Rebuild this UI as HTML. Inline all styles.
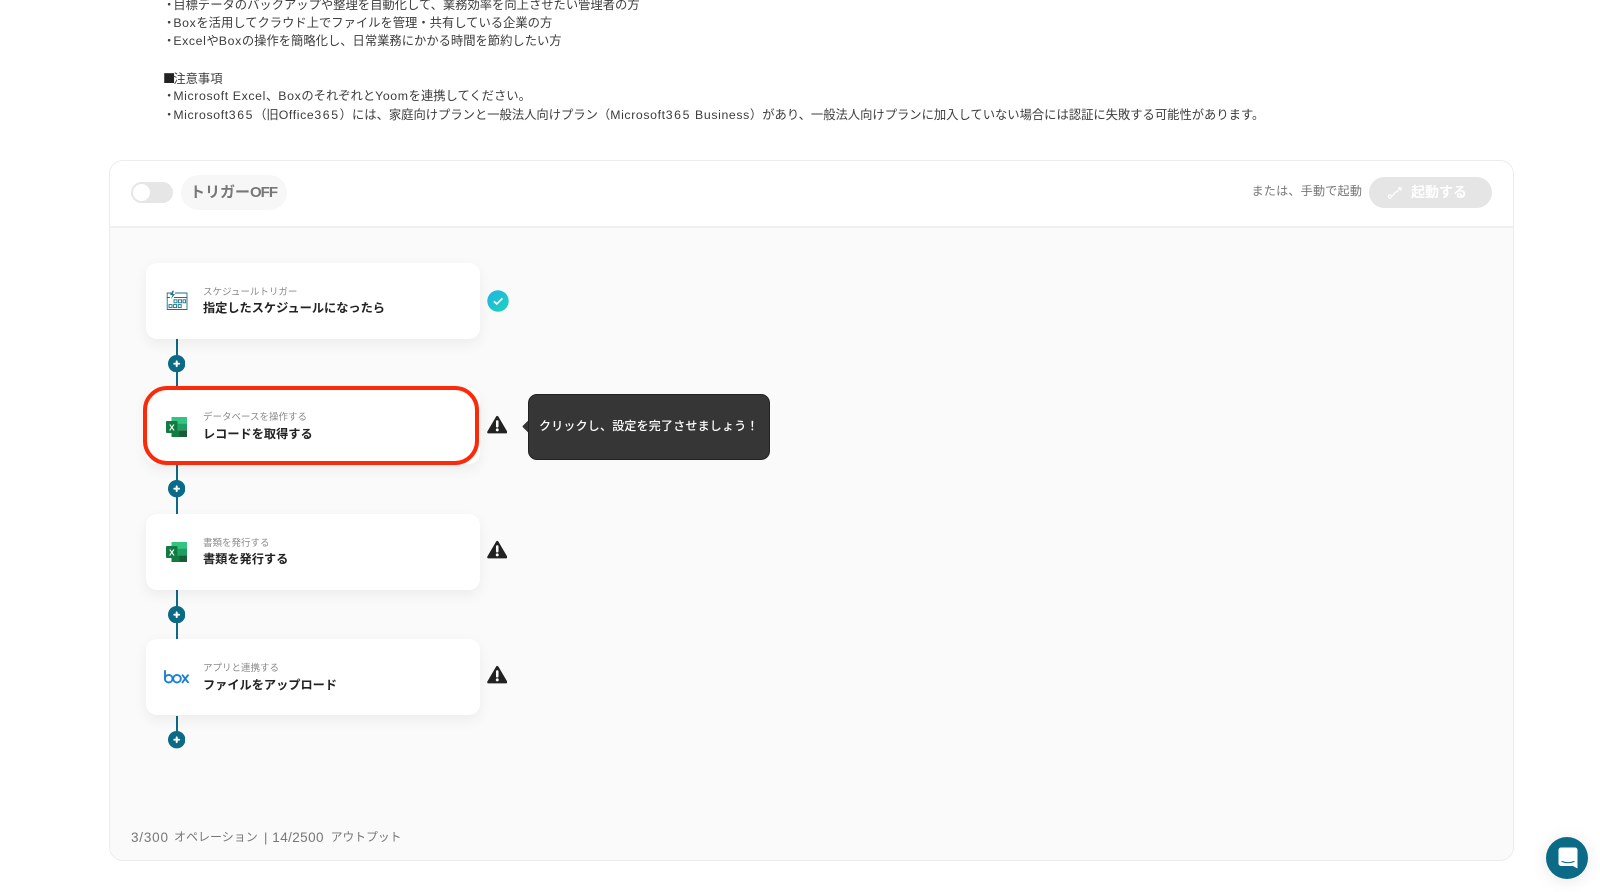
<!DOCTYPE html>
<html lang="ja"><head><meta charset="utf-8"><title>Yoom</title>
<style>
html,body{margin:0;padding:0;background:#fff}
body{width:1600px;height:892px;position:relative;overflow:hidden;font-family:"Liberation Sans","Noto Sans CJK JP",sans-serif;color:#333}
.t,.a{position:absolute;white-space:nowrap}
.t{left:163px;font-size:12.3px;line-height:18px;color:#3c3c3c}
.t i{font-style:normal;margin-right:-2px}
.l{letter-spacing:.62px}
.d{letter-spacing:1.6px}
.sq{font-family:"Noto Sans CJK JP",sans-serif;letter-spacing:-2px;color:#222}
#panel{position:absolute;left:109px;top:160px;width:1405px;height:701px;box-sizing:border-box;border:1px solid #ececec;border-radius:14px;background:#fafafa;overflow:hidden}
#head{position:absolute;left:0;top:0;right:0;height:65px;background:#fff;border-bottom:2px solid #f0f0f0}
.card{position:absolute;left:146px;width:334px;height:76px;background:#fff;border-radius:11px;box-shadow:0 5px 14px rgba(0,0,0,.06)}
.lab{position:absolute;left:203px;font-size:9.5px;line-height:14px;color:#8a8a8a;white-space:nowrap}
.ttl{position:absolute;left:203px;font-size:12.2px;line-height:18px;font-weight:700;color:#222;white-space:nowrap}
.ln{position:absolute;left:175.5px;width:2px;background:#0b6a85}
.pl{position:absolute;left:167.6px;width:17.4px;height:17.4px}
.w{position:absolute;left:486.5px;width:20.5px;height:19px}
.f{position:absolute;top:827.5px;line-height:19px;color:#777;white-space:nowrap}
</style></head><body>

<div class="t" style="top:-4.5px"><i>・</i>目標データのバックアップや整理を自動化して、業務効率を向上させたい管理者の方</div>
<div class="t" style="top:13.7px"><i>・</i><span class="l">Box</span>を活用してクラウド上でファイルを管理・共有している企業の方</div>
<div class="t" style="top:32px"><i>・</i><span class="l">Excel</span>や<span class="l">Box</span>の操作を簡略化し、日常業務にかかる時間を節約したい方</div>
<div class="t" style="top:68.5px"><span class="sq">■</span>注意事項</div>
<div class="t" style="top:87px"><i>・</i><span class="l">Microsoft Excel</span>、<span class="l">Box</span>のそれぞれと<span class="l">Yoom</span>を連携してください。</div>
<div class="t" style="top:105.5px"><i>・</i><span class="l">Microsoft</span><span class="d">365</span>（旧<span class="l">Office</span><span class="d">365</span>）には、家庭向けプランと一般法人向けプラン（<span class="l">Microsoft</span><span class="d">365</span><span class="l"> Business</span>）があり、一般法人向けプランに加入していない場合には認証に失敗する可能性があります。</div>

<div id="panel"><div id="head"></div></div>

<div class="a" style="left:130.5px;top:182px;width:42.5px;height:21px;border-radius:11px;background:#e6e6e6"></div>
<div class="a" style="left:133px;top:184px;width:17px;height:17px;border-radius:50%;background:#fff"></div>
<div class="a" style="left:180.5px;top:175px;width:106px;height:35px;border-radius:18px;background:#f7f7f7"></div>
<div class="a" style="left:190px;top:182px;font-size:15px;line-height:22px;font-weight:700;color:#777">トリガー<span style="letter-spacing:-1px">OFF</span></div>

<div class="a" style="left:1251.5px;top:182px;font-size:12.1px;line-height:18px;color:#777;letter-spacing:.2px">または、手動で起動</div>
<div class="a" style="left:1369px;top:176.5px;width:123px;height:31.5px;border-radius:16px;background:#e5e5e5"></div>
<svg class="a" style="left:1387px;top:185px" width="16" height="15" viewBox="0 0 16 15" fill="none" stroke="#fff" stroke-width="1.2"><circle cx="2.8" cy="11.5" r="1.5"/><path d="M4.5 11C7 11 7 7 9 7C11 7 11 5 13.5 3M10.8 2.8H14V6"/></svg>
<div class="a" style="left:1411px;top:181.5px;font-size:14px;line-height:21px;font-weight:700;color:#fff">起動する</div>

<!-- connector lines -->
<div class="ln" style="top:339px;height:50px"></div>
<div class="ln" style="top:465px;height:49px"></div>
<div class="ln" style="top:590px;height:49px"></div>
<div class="ln" style="top:716px;height:17px"></div>

<!-- plus buttons -->
<svg class="pl" style="top:355px" viewBox="0 0 18 18"><circle cx="9" cy="9" r="9" fill="#0b6a85"/><path d="M9 6.5v5M6.5 9h5" stroke="#fff" stroke-width="2" stroke-linecap="round"/></svg>
<svg class="pl" style="top:480.4px" viewBox="0 0 18 18"><circle cx="9" cy="9" r="9" fill="#0b6a85"/><path d="M9 6.5v5M6.5 9h5" stroke="#fff" stroke-width="2" stroke-linecap="round"/></svg>
<svg class="pl" style="top:606px" viewBox="0 0 18 18"><circle cx="9" cy="9" r="9" fill="#0b6a85"/><path d="M9 6.5v5M6.5 9h5" stroke="#fff" stroke-width="2" stroke-linecap="round"/></svg>
<svg class="pl" style="top:731.3px" viewBox="0 0 18 18"><circle cx="9" cy="9" r="9" fill="#0b6a85"/><path d="M9 6.5v5M6.5 9h5" stroke="#fff" stroke-width="2" stroke-linecap="round"/></svg>

<!-- cards -->
<div class="card" style="top:262.5px"></div>
<div class="card" style="top:388px"></div>
<div class="card" style="top:513.5px"></div>
<div class="card" style="top:639px"></div>

<!-- red highlight -->
<div class="a" style="left:142.8px;top:385.6px;width:336px;height:79px;box-sizing:border-box;border:4.5px solid #fb2a0a;border-radius:24px"></div>

<!-- schedule icon -->
<svg class="a" style="left:165.5px;top:290px" width="22" height="21" viewBox="0 0 22 21" fill="none" stroke="#1a7189" stroke-width=".9"><path d="M5 3H1.2V19.5H21V3H9"/><path d="M1.2 7.5H4M8 7.5H21"/><path d="M6.5 .8L4 5H6.5L5 9L9 4H6.7L8 .8Z" fill="#1a7189" stroke="none"/><rect x="8" y="9.8" width="3" height="3"/><rect x="12.5" y="9.8" width="3" height="3"/><rect x="17" y="9.8" width="2.6" height="3"/><rect x="3" y="14.6" width="3" height="3"/><rect x="7.6" y="14.6" width="3" height="3"/><rect x="12.2" y="14.6" width="3" height="3"/></svg>

<!-- excel icons -->
<svg class="a" style="left:165.5px;top:416.5px" width="21" height="20" viewBox="0 0 21 20"><rect x="5.5" y="0" width="15.5" height="6.7" fill="#33c481"/><rect x="5.5" y="6.6" width="8" height="6.7" fill="#21a366"/><rect x="13.5" y="6.6" width="7.5" height="6.7" fill="#1f9c5f"/><rect x="5.5" y="13.3" width="8" height="6.7" fill="#107c41"/><rect x="13.5" y="13.3" width="7.5" height="6.7" fill="#185c37"/><rect x="0" y="4" width="11.5" height="12" rx="1" fill="#107c41"/><text x="5.8" y="13.4" text-anchor="middle" font-size="8.5" font-weight="700" fill="#fff" font-family="Liberation Sans">X</text></svg>
<svg class="a" style="left:165.5px;top:542px" width="21" height="20" viewBox="0 0 21 20"><rect x="5.5" y="0" width="15.5" height="6.7" fill="#33c481"/><rect x="5.5" y="6.6" width="8" height="6.7" fill="#21a366"/><rect x="13.5" y="6.6" width="7.5" height="6.7" fill="#1f9c5f"/><rect x="5.5" y="13.3" width="8" height="6.7" fill="#107c41"/><rect x="13.5" y="13.3" width="7.5" height="6.7" fill="#185c37"/><rect x="0" y="4" width="11.5" height="12" rx="1" fill="#107c41"/><text x="5.8" y="13.4" text-anchor="middle" font-size="8.5" font-weight="700" fill="#fff" font-family="Liberation Sans">X</text></svg>

<!-- box icon -->
<svg class="a" style="left:164px;top:670px" width="25" height="15" viewBox="0 0 25 15" fill="none" stroke="#1b7fd4" stroke-width="1.9" stroke-linecap="round"><path d="M1 1V8.5"/><circle cx="4.7" cy="8.7" r="3.8"/><circle cx="13" cy="8.7" r="3.8"/><path d="M18.5 5.2L24 12.3M24 5.2L18.5 12.3"/></svg>

<!-- card text -->
<div class="lab" style="top:285.5px">スケジュールトリガー</div>
<div class="ttl" style="top:298.5px">指定したスケジュールになったら</div>
<div class="lab" style="top:411px">データベースを操作する</div>
<div class="ttl" style="top:424.5px">レコードを取得する</div>
<div class="lab" style="top:536.5px">書類を発行する</div>
<div class="ttl" style="top:549.5px">書類を発行する</div>
<div class="lab" style="top:662px">アプリと連携する</div>
<div class="ttl" style="top:675.5px">ファイルをアップロード</div>

<!-- check -->
<svg class="a" style="left:487px;top:290px" width="22" height="22" viewBox="0 0 22 22"><defs><linearGradient id="g" x1="0" y1="0" x2="1" y2="1"><stop offset="0" stop-color="#1fb4e4"/><stop offset="1" stop-color="#1fd2bc"/></linearGradient></defs><circle cx="11" cy="11" r="10.7" fill="url(#g)"/><path d="M6.8 11.2L9.8 14L15.4 8.4" fill="none" stroke="#fff" stroke-width="1.7"/></svg>

<!-- warnings -->
<svg class="w" style="top:414.5px" viewBox="0 0 21 19"><path d="M10.5 2L19.5 17.3H1.5Z" fill="#222" stroke="#222" stroke-width="2.6" stroke-linejoin="round"/><rect x="9.2" y="5.2" width="2.6" height="7.4" rx="1.2" fill="#fff"/><circle cx="10.5" cy="15" r="1.5" fill="#fff"/></svg>
<svg class="w" style="top:540px" viewBox="0 0 21 19"><path d="M10.5 2L19.5 17.3H1.5Z" fill="#222" stroke="#222" stroke-width="2.6" stroke-linejoin="round"/><rect x="9.2" y="5.2" width="2.6" height="7.4" rx="1.2" fill="#fff"/><circle cx="10.5" cy="15" r="1.5" fill="#fff"/></svg>
<svg class="w" style="top:665px" viewBox="0 0 21 19"><path d="M10.5 2L19.5 17.3H1.5Z" fill="#222" stroke="#222" stroke-width="2.6" stroke-linejoin="round"/><rect x="9.2" y="5.2" width="2.6" height="7.4" rx="1.2" fill="#fff"/><circle cx="10.5" cy="15" r="1.5" fill="#fff"/></svg>

<!-- tooltip -->
<div class="a" style="left:524px;top:422px;width:9px;height:9px;background:#363636;transform:rotate(45deg);border-radius:1px"></div>
<div class="a" style="left:528px;top:393.5px;width:242px;height:66px;box-sizing:border-box;background:#363636;border:1px solid #222;border-radius:9px"></div>
<div class="a" style="left:539px;top:416.5px;font-size:12px;line-height:18px;font-weight:500;color:#fff;letter-spacing:.2px">クリックし、設定を完了させましょう！</div>

<!-- footer text -->
<div class="f" style="left:131px;font-size:13.5px;letter-spacing:.8px">3/300</div>
<div class="f" style="left:174px;font-size:12px">オペレーション</div>
<div class="f" style="left:264px;font-size:13px">|</div>
<div class="f" style="left:272.3px;font-size:13.5px;letter-spacing:.4px">14/2500</div>
<div class="f" style="left:330.7px;font-size:11.8px">アウトプット</div>

<!-- chat -->
<div class="a" style="left:1546px;top:837px;width:42px;height:42px;border-radius:50%;background:#0b6a85;box-shadow:0 2px 16px rgba(0,0,0,.1)"></div>
<svg class="a" style="left:1557.5px;top:846.5px" width="20" height="22" viewBox="0 0 20 22"><path d="M3 .5H17A2.5 2.5 0 0 1 19.5 3V21.5L15 19H3A2.5 2.5 0 0 1 .5 16.5V3A2.5 2.5 0 0 1 3 .5Z" fill="#fff"/><path d="M4 14.5Q10 17 16 14.5" fill="none" stroke="#0b6a85" stroke-width="1.1" stroke-linecap="round"/></svg>

</body></html>
